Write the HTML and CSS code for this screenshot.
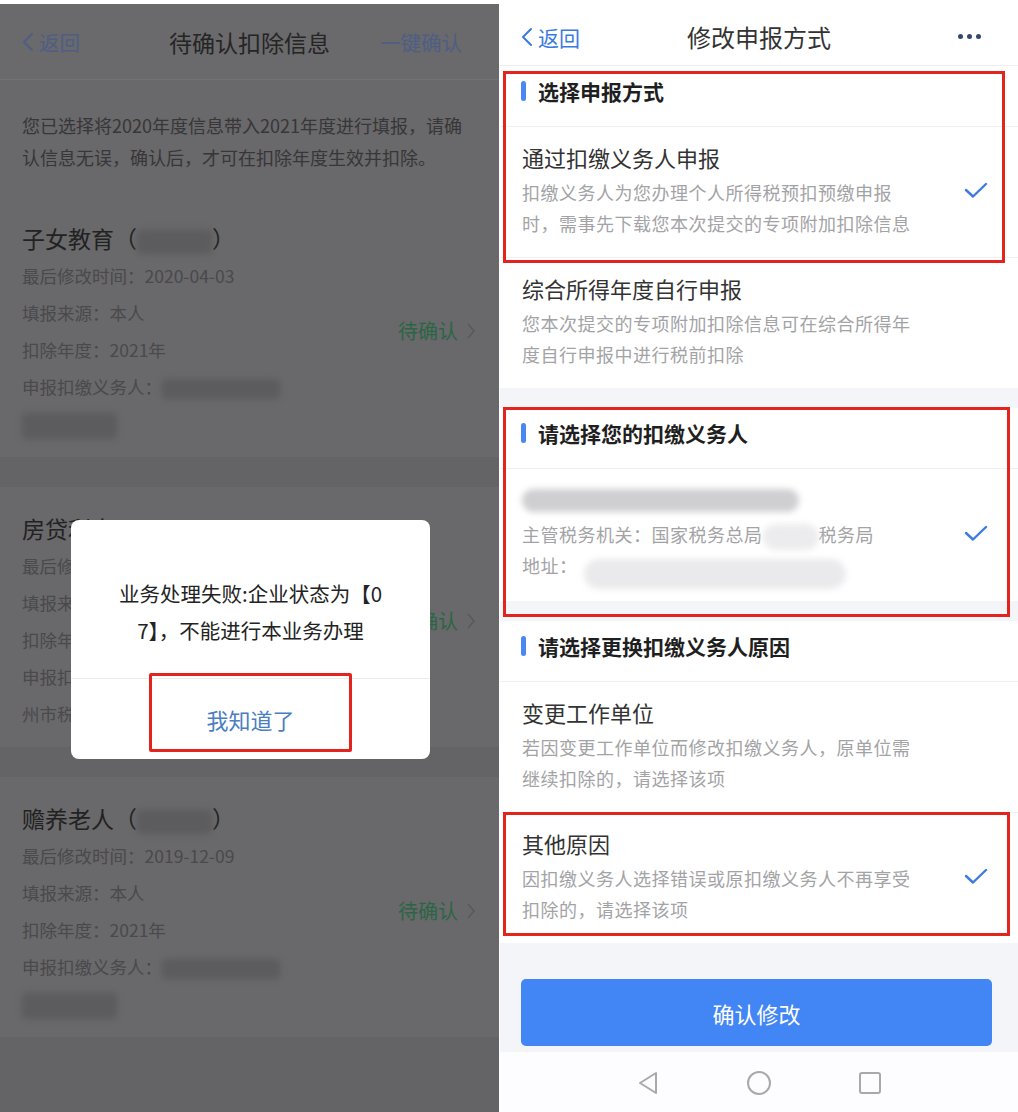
FILE: index.html
```html
<!DOCTYPE html>
<html lang="zh-CN">
<head>
  <meta charset="UTF-8">
  <meta name="viewport" content="width=device-width, initial-scale=1.0">
  <title>待确认扣除信息 / 修改申报方式</title>
  <link rel="stylesheet" href="styles.css">
</head>
<body>
  <div class="shots">

    <!-- 左图：待确认扣除信息 + 失败弹窗 -->
    <section class="phone phone-dim">
      <header class="topbar">
        <a class="back"><svg width="12" height="20" viewBox="0 0 12 20"><polyline points="10,2 2,10 10,18" /></svg>返回</a>
        <h1>待确认扣除信息</h1>
        <a class="action">一键确认</a>
      </header>

      <p class="intro">您已选择将2020年度信息带入2021年度进行填报，请确认信息无误，确认后，才可在扣除年度生效并扣除。</p>

      <div class="card">
        <div class="card-info">
          <h2>子女教育（<span class="blur blur-name"></span>）</h2>
          <p>最后修改时间：2020-04-03</p>
          <p>填报来源：本人</p>
          <p>扣除年度：2021年</p>
          <p>申报扣缴义务人：<span class="blur blur-org"></span></p>
          <p><span class="blur blur-line"></span></p>
        </div>
        <div class="status">待确认<svg width="8" height="16" viewBox="0 0 8 16"><polyline points="1,1 7,8 1,15" /></svg></div>
      </div>

      <!-- 被弹窗遮住的部分只保留露出的文字 -->
      <div class="card">
        <div class="card-info">
          <h2>房贷利息</h2>
          <p>最后修改</p>
          <p>填报来源</p>
          <p>扣除年度</p>
          <p>申报扣缴义务人：</p>
          <p>州市税务局</p>
        </div>
        <div class="status">待确认<svg width="8" height="16" viewBox="0 0 8 16"><polyline points="1,1 7,8 1,15" /></svg></div>
      </div>

      <div class="card">
        <div class="card-info">
          <h2>赡养老人（<span class="blur blur-name"></span>）</h2>
          <p>最后修改时间：2019-12-09</p>
          <p>填报来源：本人</p>
          <p>扣除年度：2021年</p>
          <p>申报扣缴义务人：<span class="blur blur-org"></span></p>
          <p><span class="blur blur-line"></span></p>
        </div>
        <div class="status">待确认<svg width="8" height="16" viewBox="0 0 8 16"><polyline points="1,1 7,8 1,15" /></svg></div>
      </div>

      <div class="dialog">
        <p class="dialog-msg">业务处理失败:企业状态为【0<br>7】，不能进行本业务办理</p>
        <div class="dialog-btn">我知道了</div>
        <span class="mark mark-btn"></span>
      </div>
    </section>

    <!-- 右图：修改申报方式 -->
    <section class="phone phone-form">
      <header class="topbar">
        <a class="back"><svg width="12" height="20" viewBox="0 0 12 20"><polyline points="10,2 2,10 10,18" /></svg>返回</a>
        <h1>修改申报方式</h1>
        <span class="more"><i></i><i></i><i></i></span>
      </header>

      <div class="group">
        <h3 class="group-title">选择申报方式</h3>
        <div class="option">
          <div class="option-text">
            <h4>通过扣缴义务人申报</h4>
            <p>扣缴义务人为您办理个人所得税预扣预缴申报时，需事先下载您本次提交的专项附加扣除信息</p>
          </div>
          <svg class="check" viewBox="0 0 24 16"><polyline points="2,8 9,14.5 22,2" /></svg>
        </div>
        <div class="option">
          <div class="option-text">
            <h4>综合所得年度自行申报</h4>
            <p>您本次提交的专项附加扣除信息可在综合所得年度自行申报中进行税前扣除</p>
          </div>
        </div>
      </div>

      <div class="group">
        <h3 class="group-title">请选择您的扣缴义务人</h3>
        <div class="option">
          <div class="option-text">
            <h4><span class="blur blur-company"></span></h4>
            <p>主管税务机关：国家税务总局<span class="blur blur-bureau"></span>税务局</p>
            <p class="addr">地址：<span class="blur blur-addr"></span></p>
          </div>
          <svg class="check" viewBox="0 0 24 16"><polyline points="2,8 9,14.5 22,2" /></svg>
        </div>
      </div>

      <div class="group">
        <h3 class="group-title">请选择更换扣缴义务人原因</h3>
        <div class="option">
          <div class="option-text">
            <h4>变更工作单位</h4>
            <p>若因变更工作单位而修改扣缴义务人，原单位需继续扣除的，请选择该项</p>
          </div>
        </div>
        <div class="option">
          <div class="option-text">
            <h4>其他原因</h4>
            <p>因扣缴义务人选择错误或原扣缴义务人不再享受扣除的，请选择该项</p>
          </div>
          <svg class="check" viewBox="0 0 24 16"><polyline points="2,8 9,14.5 22,2" /></svg>
        </div>
      </div>

      <div class="footer">
        <button class="submit" type="button">确认修改</button>
      </div>

      <nav class="sysbar">
        <svg width="22" height="24" viewBox="0 0 22 24"><polygon points="19,2 3,12 19,22" /></svg>
        <svg width="24" height="24" viewBox="0 0 24 24"><circle cx="12" cy="12" r="11" /></svg>
        <svg width="22" height="22" viewBox="0 0 22 22"><rect x="1" y="1" width="20" height="20" rx="2" /></svg>
      </nav>

      <!-- 标注红框 -->
      <span class="mark mark-1"></span>
      <span class="mark mark-2"></span>
      <span class="mark mark-3"></span>
    </section>

  </div>
</body>
</html>
```

FILE: styles.css
```css
* {
  box-sizing: border-box;
}
body {
  margin: 0;
  background: #fff;
  font-family: "Noto Sans CJK SC", "Noto Sans", sans-serif;
}
.shots {
  display: flex;
  align-items: flex-start;
  width: 1018px;
  height: 1112px;
  overflow: hidden;
}
.phone {
  position: relative;
  overflow: hidden;
}

/* shared top bar */
.topbar {
  display: grid;
  grid-template-columns: 1fr auto 1fr;
  align-items: center;
}
.topbar h1 {
  margin: 0;
  font-weight: 400;
}
.back {
  display: flex;
  align-items: center;
  gap: 5px;
}
.back svg polyline {
  fill: none;
  stroke: currentColor;
  stroke-width: 2;
  stroke-linecap: round;
  stroke-linejoin: round;
}

/* left: dimmed page under dialog */
.phone-dim {
  width: 499px;
  height: 1108px;
  margin-top: 4px;
  background: #646365;
  color: #262626;
}
.phone-dim .topbar {
  height: 76px;
  padding: 0 22px;
  background: #6a696b;
  border-bottom: 1px solid #727173;
}
.phone-dim .topbar h1 {
  font-size: 23px;
  color: #252525;
}
.phone-dim .back,
.phone-dim .action {
  font-size: 20.5px;
  color: #4e5e85;
}
.action {
  justify-self: end;
  margin-right: 15px;
}
.intro {
  margin: 0;
  padding: 29px 22px 24px;
  background: #69686a;
  font-size: 18px;
  line-height: 32px;
  color: #373638;
}
.card {
  display: flex;
  align-items: center;
  padding: 22px 24px 15px 22px;
  background: #69686a;
}
.card + .card {
  margin-top: 30px;
}
.card-info {
  flex: 1;
}
.card h2 {
  margin: 0;
  font-size: 23px;
  line-height: 38px;
  font-weight: 400;
  color: #222;
}
.card p {
  margin: 0;
  font-size: 17.5px;
  line-height: 37px;
  color: #4a494c;
  white-space: nowrap;
}
.status {
  display: flex;
  align-items: center;
  gap: 9px;
  font-size: 20px;
  color: #2a6646;
}
.status polyline {
  fill: none;
  stroke: #59585b;
  stroke-width: 1.5;
}

.blur {
  display: inline-block;
  vertical-align: middle;
  border-radius: 5px;
  filter: blur(3px);
}
.phone-dim .blur {
  background: #5c5b5d;
}
.blur-name {
  width: 75px;
  height: 24px;
}
.blur-org {
  width: 118px;
  height: 20px;
}
.blur-line {
  width: 95px;
  height: 26px;
}

/* dialog over the dimmed page */
.dialog {
  position: absolute;
  left: 71px;
  top: 516px;
  width: 359px;
  background: #fff;
  border-radius: 8px;
  text-align: center;
}
.dialog-msg {
  margin: 0;
  padding: 55px 20px 29px;
  font-size: 20.5px;
  line-height: 37px;
  color: #232323;
}
.dialog-btn {
  height: 81px;
  line-height: 80px;
  border-top: 1px solid #ececee;
  font-size: 22px;
  color: #4a7ec0;
}

/* red annotation frames */
.mark {
  position: absolute;
  border: 3px solid #e3231d;
  pointer-events: none;
}
.mark-btn {
  left: 78px;
  top: 153px;
  width: 203px;
  height: 79px;
  border-radius: 2px;
}
.mark-1 {
  left: 3px;
  top: 71px;
  width: 502px;
  height: 192px;
}
.mark-2 {
  left: 3px;
  top: 407px;
  width: 507px;
  height: 210px;
}
.mark-3 {
  left: 3px;
  top: 812px;
  width: 507px;
  height: 124px;
}

/* right: form page */
.phone-form {
  width: 518px;
  height: 1112px;
  margin-left: 1px;
  background: #f4f5f9;
}
.phone-form .topbar {
  height: 66px;
  padding: 8px 21px 0;
  background: #fff;
  border-bottom: 1px solid #efeff2;
}
.phone-form .topbar h1 {
  font-size: 24px;
  color: #333;
}
.phone-form .back {
  font-size: 21px;
  color: #3a7be0;
}
.more {
  justify-self: end;
  display: flex;
  gap: 4px;
  margin-right: 16px;
}
.more i {
  width: 5px;
  height: 5px;
  border-radius: 50%;
  background: #34486e;
}

.group {
  background: #fff;
}
.group + .group {
  margin-top: 20px;
}
.group-title {
  display: flex;
  align-items: center;
  gap: 12px;
  height: 61px;
  margin: 0;
  padding: 0 0 11px 21px;
  border-bottom: 1px solid #f0f0f2;
  font-size: 21px;
  font-weight: 700;
  color: #1f1f1f;
}
.group-title::before {
  content: "";
  width: 5px;
  height: 20px;
  border-radius: 3px;
  background: #4a87f2;
}
.option {
  display: flex;
  align-items: center;
  padding: 14px 30px 18px 22px;
}
.option + .option {
  border-top: 1px solid #f0f0f2;
}
.option-text {
  width: 395px;
}
.option h4 {
  margin: 0;
  font-size: 22px;
  line-height: 32px;
  font-weight: 400;
  color: #333;
}
.option p {
  margin: 4px 0 0;
  font-size: 18px;
  letter-spacing: 0.5px;
  line-height: 31px;
  color: #a3a3a6;
}
.option p.addr {
  margin-top: 0;
}
.check {
  margin-left: auto;
  width: 24px;
  height: 16px;
}
.check polyline {
  fill: none;
  stroke: #3d7be0;
  stroke-width: 2.4;
  stroke-linecap: round;
  stroke-linejoin: round;
}
.blur-company {
  width: 277px;
  height: 23px;
  border-radius: 12px;
  background: #cfcfd2;
  transform: translateY(-3px);
}
.blur-bureau {
  width: 56px;
  height: 26px;
  border-radius: 13px;
  background: #ececee;
}
.blur-addr {
  width: 262px;
  height: 30px;
  margin-left: 6px;
  border-radius: 15px;
  background: #eaeaec;
  transform: translateY(6px);
}

.footer {
  height: 109px;
  padding: 36px 26px 0 21px;
}
.submit {
  display: block;
  width: 100%;
  height: 67px;
  border: 0;
  border-radius: 5px;
  background: #4285f4;
  color: #fff;
  font-family: inherit;
  font-size: 22px;
}
.sysbar {
  display: flex;
  justify-content: center;
  align-items: center;
  gap: 88px;
  height: 62px;
  background: #fdfdff;
}
.sysbar svg * {
  fill: none;
  stroke: #a9a9ac;
  stroke-width: 2;
  stroke-linejoin: round;
}
```
